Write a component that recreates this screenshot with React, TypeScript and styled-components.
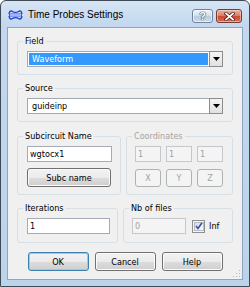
import React from "react";
import styled, { createGlobalStyle, css } from "styled-components";

const Global = createGlobalStyle`
  html, body { margin: 0; padding: 0; background: #ffffff; }
  body {
    font-family: "DejaVu Sans Condensed", "DejaVu Sans", sans-serif;
    font-stretch: condensed;
    font-size: 9px;
    color: #000;
  }
  * { box-sizing: border-box; }
`;

const Window = styled.div`
  width: 250px;
  height: 287px;
  border: 1px solid #3f4a57;
  border-radius: 6px 6px 0 0;
  background: linear-gradient(#d6e5f5 0px, #c3d8ee 24px, #bcd3ec 100%);
  display: flex;
  flex-direction: column;
  overflow: hidden;
`;

const TitleBar = styled.div`
  height: 26px;
  flex: none;
  display: flex;
  align-items: center;
  padding: 1px 7px 0 7px;
  gap: 5px;
`;

const Title = styled.span`
  font-family: "Liberation Sans", Arial, sans-serif;
  font-stretch: normal;
  font-size: 10px;
  line-height: 12px;
  color: #000;
`;

const CaptionButtons = styled.div`
  margin-left: auto;
  display: flex;
  gap: 3px;
  align-self: flex-start;
  margin-top: 7px;
`;

const CaptionButton = styled.div<{ $close?: boolean }>`
  height: 14px;
  width: ${(p) => (p.$close ? 26 : 21)}px;
  border-radius: 3px;
  display: flex;
  align-items: center;
  justify-content: center;
  ${(p) =>
    p.$close
      ? css`
          border: 1px solid #7a3a30;
          background: linear-gradient(#e8b2a6 0%, #d9826f 45%, #c9492f 55%, #d5735c 100%);
          box-shadow: inset 0 0 0 1px rgba(255, 220, 210, 0.55);
        `
      : css`
          border: 1px solid #71849b;
          background: linear-gradient(#eef4fb 0%, #d3e0ee 45%, #b9cbe0 55%, #cbdaeb 100%);
          box-shadow: inset 0 0 0 1px rgba(255, 255, 255, 0.6);
        `}
`;

const HelpGlyph = styled.span`
  font-family: "Liberation Sans", Arial, sans-serif;
  font-stretch: normal;
  font-weight: bold;
  font-size: 11px;
  line-height: 11px;
  color: #ffffff;
  text-shadow: 0 0 1px #3a4a5e, 0 0 1px #3a4a5e, 0 0 1px #3a4a5e;
`;

const Client = styled.div`
  position: relative;
  flex: 1;
  margin: 0 6px 6px 6px;
  border: 1px solid #8ea5c0;
  background: #f0f0f0;
  padding: 8px 9px 0 9px;
  display: flex;
  flex-direction: column;
  gap: 8px;
`;

const Group = styled.fieldset<{ $pt?: number; $pb?: number; $pl?: number }>`
  margin: 0;
  min-width: 0;
  border: 1px solid #d5dfe5;
  border-radius: 3px;
  padding: ${(p) => p.$pt ?? 5}px 9px ${(p) => p.$pb ?? 7}px ${(p) => p.$pl ?? 9}px;
  display: flex;
  flex-direction: column;
  gap: 6px;
`;

const Legend = styled.legend<{ $disabled?: boolean; $ml?: number }>`
  padding: 0 2px;
  margin-left: ${(p) => p.$ml ?? -4}px;
  font-size: 9px;
  line-height: 10px;
  color: ${(p) => (p.$disabled ? "#a3a3a3" : "#000")};
`;

const Row = styled.div<{ $mt?: number }>`
  display: grid;
  grid-template-columns: 104px 1fr;
  gap: 5px;
  margin-top: ${(p) => p.$mt ?? 0}px;
`;

const Row2 = styled.div`
  display: grid;
  grid-template-columns: 101px 1fr;
  gap: 5px;
`;

const Combo = styled.div`
  height: 16px;
  display: flex;
  align-items: stretch;
  border: 1px solid #a2a9b2;
  background: #fff;
`;

const ComboValue = styled.div<{ $selected?: boolean }>`
  flex: 1;
  margin: 1px;
  padding-left: 3px;
  line-height: 12px;
  font-size: 9px;
  background: ${(p) => (p.$selected ? "#3399ff" : "transparent")};
  color: ${(p) => (p.$selected ? "#fff" : "#000")};
`;

const ComboArrow = styled.div`
  width: 14px;
  margin: -1px -1px -1px 0;
  border: 1px solid #8d8d8d;
  background: linear-gradient(#f4f4f4, #e1e1e1);
  display: flex;
  align-items: center;
  justify-content: center;
`;

const TextBox = styled.div<{ $w?: number; $disabled?: boolean }>`
  height: 16px;
  width: ${(p) => (p.$w ? `${p.$w}px` : "auto")};
  border: 1px solid ${(p) => (p.$disabled ? "#c4c8cc" : "#a7acb4")};
  background: ${(p) => (p.$disabled ? "#f4f4f4" : "#fff")};
  color: ${(p) => (p.$disabled ? "#a3a3a3" : "#000")};
  padding-left: 2px;
  line-height: 14px;
  font-size: 9px;
`;

const CoordGrid = styled.div`
  display: grid;
  grid-template-columns: repeat(3, 1fr);
  column-gap: 5px;
  row-gap: 6px;
`;

const PushButton = styled.div<{ $w?: number; $h?: number; $mt?: number; $default?: boolean; $disabled?: boolean }>`
  width: ${(p) => (p.$w ? `${p.$w}px` : "auto")};
  height: ${(p) => p.$h ?? 19}px;
  margin-top: ${(p) => p.$mt ?? 0}px;
  border-radius: 3px;
  display: flex;
  align-items: center;
  justify-content: center;
  font-size: 9px;
  ${(p) =>
    p.$disabled
      ? css`
          border: 1px solid #adb2b5;
          background: #f4f4f4;
          color: #a3a3a3;
        `
      : p.$default
      ? css`
          border: 1px solid #3c7fb1;
          background: linear-gradient(#f2f2f2 0%, #ebebeb 50%, #dddddd 51%, #cfcfcf 100%);
          box-shadow: inset 0 0 0 1px #7fd6f7;
          color: #000;
        `
      : css`
          border: 1px solid #707070;
          background: linear-gradient(#f2f2f2 0%, #ebebeb 50%, #dddddd 51%, #cfcfcf 100%);
          box-shadow: inset 0 0 0 1px #fbfbfb;
          color: #000;
        `}
`;

const NbRow = styled.div`
  display: flex;
  align-items: center;
`;

const Check = styled.div`
  width: 13px;
  height: 13px;
  margin-left: 6px;
  border: 1px solid #8e8f8f;
  background: #f4f4f4;
  padding: 1px;
  display: flex;
`;

const CheckInner = styled.div`
  flex: 1;
  border: 1px solid #b9bcc2;
  background: linear-gradient(135deg, #d8dadd, #fbfbfb);
  display: flex;
  align-items: center;
  justify-content: center;
`;

const CheckLabel = styled.span`
  margin-left: 4px;
  font-size: 9px;
  line-height: 10px;
`;

const ButtonBar = styled.div`
  display: flex;
  justify-content: center;
  gap: 6px;
  margin-top: 1px;
`;

const Grip = styled.svg`
  position: absolute;
  right: 1px;
  bottom: 1px;
`;

const AppIcon = () => (
  <svg width="15" height="12" viewBox="0 0 15 12">
    <path d="M1 4.8 C1.5 2 3 1.5 4.5 2.5 C6 3.5 9 3.5 10.5 2.5 C12 1.5 13.5 2 14 4.8" stroke="#1f3fd6" strokeWidth="1.4" fill="none" />
    <path d="M1 7.2 C1.5 10 3 10.5 4.5 9.5 C6 8.5 9 8.5 10.5 9.5 C12 10.5 13.5 10 14 7.2" stroke="#1f3fd6" strokeWidth="1.4" fill="none" />
    <rect x="1.5" y="5" width="12" height="2" fill="#ffffff" stroke="#1f3fd6" strokeWidth="0.8" />
  </svg>
);

const CloseX = () => (
  <svg width="11" height="9" viewBox="0 0 11 9">
    <path d="M2 1.5 L9 7.5 M9 1.5 L2 7.5" stroke="#4a1a14" strokeWidth="3.2" strokeLinecap="square" />
    <path d="M2 1.5 L9 7.5 M9 1.5 L2 7.5" stroke="#ffffff" strokeWidth="1.8" strokeLinecap="square" />
  </svg>
);

const DownArrow = () => (
  <svg width="7" height="4" viewBox="0 0 7 4">
    <path d="M0 0 H7 L3.5 4 Z" fill="#000" />
  </svg>
);

const CheckMark = () => (
  <svg width="8" height="8" viewBox="0 0 8 8">
    <path d="M1 4 L3 6.5 L7 0.8" stroke="#3550b5" strokeWidth="1.6" fill="none" />
  </svg>
);

export default function App() {
  return (
    <>
      <Global />
      <Window>
        <TitleBar>
          <AppIcon />
          <Title>Time Probes Settings</Title>
          <CaptionButtons>
            <CaptionButton>
              <HelpGlyph>?</HelpGlyph>
            </CaptionButton>
            <CaptionButton $close>
              <CloseX />
            </CaptionButton>
          </CaptionButtons>
        </TitleBar>
        <Client>
          <Group $pb={7}>
            <Legend>Field</Legend>
            <Combo>
              <ComboValue $selected>Waveform</ComboValue>
              <ComboArrow>
                <DownArrow />
              </ComboArrow>
            </Combo>
          </Group>
          <Group $pb={7}>
            <Legend>Source</Legend>
            <Combo>
              <ComboValue>guideinp</ComboValue>
              <ComboArrow>
                <DownArrow />
              </ComboArrow>
            </Combo>
          </Group>
          <Row $mt={1}>
            <Group $pb={7}>
              <Legend>Subcircuit Name</Legend>
              <TextBox $w={85}>wgtocx1</TextBox>
              <PushButton $w={84}>Subc name</PushButton>
            </Group>
            <Group $pb={7} $pl={8}>
              <Legend $disabled $ml={-3}>Coordinates</Legend>
              <CoordGrid>
                <TextBox $disabled>1</TextBox>
                <TextBox $disabled>1</TextBox>
                <TextBox $disabled>1</TextBox>
                <PushButton $disabled $h={18} $mt={1}>X</PushButton>
                <PushButton $disabled $h={18} $mt={1}>Y</PushButton>
                <PushButton $disabled $h={18} $mt={1}>Z</PushButton>
              </CoordGrid>
            </Group>
          </Row>
          <Row2>
            <Group $pb={8}>
              <Legend>Iterations</Legend>
              <TextBox $w={83}>1</TextBox>
            </Group>
            <Group $pb={8} $pl={8}>
              <Legend $ml={-3}>Nb of files</Legend>
              <NbRow>
                <TextBox $w={54} $disabled>0</TextBox>
                <Check>
                  <CheckInner>
                    <CheckMark />
                  </CheckInner>
                </Check>
                <CheckLabel>Inf</CheckLabel>
              </NbRow>
            </Group>
          </Row2>
          <ButtonBar>
            <PushButton $w={61} $h={19} $default>OK</PushButton>
            <PushButton $w={61} $h={19}>Cancel</PushButton>
            <PushButton $w={61} $h={19}>Help</PushButton>
          </ButtonBar>
          <Grip width="8" height="8" viewBox="0 0 8 8">
            <g fill="#b4b8bd">
              <rect x="6" y="0" width="1" height="1" />
              <rect x="3" y="3" width="1" height="1" />
              <rect x="6" y="3" width="1" height="1" />
              <rect x="0" y="6" width="1" height="1" />
              <rect x="3" y="6" width="1" height="1" />
              <rect x="6" y="6" width="1" height="1" />
            </g>
          </Grip>
        </Client>
      </Window>
    </>
  );
}
